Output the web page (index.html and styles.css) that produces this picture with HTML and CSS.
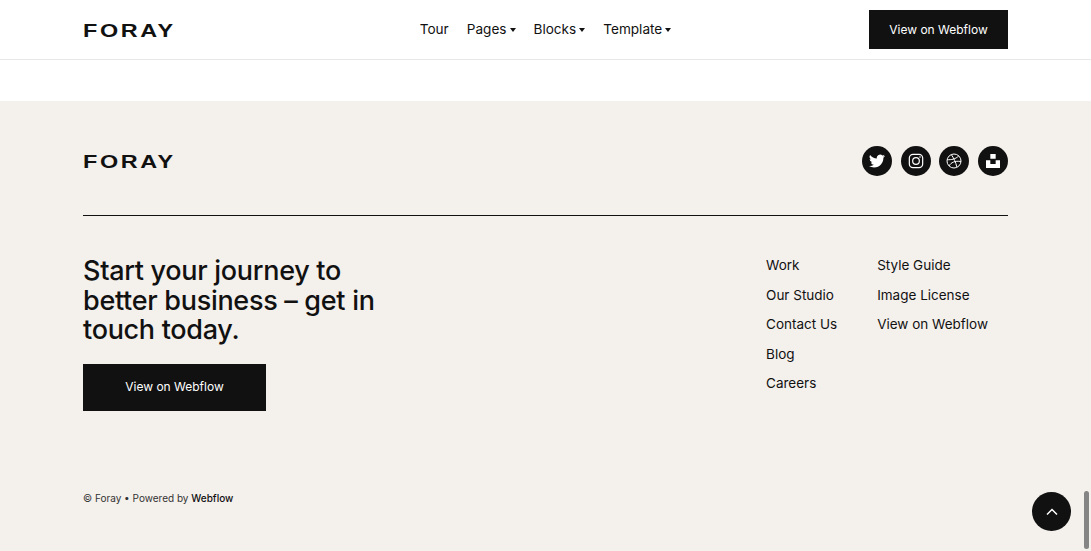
FILE: index.html
```html
<!DOCTYPE html>
<html>
<head>
    <title>Foray</title>
    <link rel="stylesheet" href="styles.css">
</head>
<body>
    <nav class="navbar">
        <div class="container nav-inner">
            <a class="logo"><span class="logo-text">FORAY</span></a>
            <div class="nav-links">
                <a>Tour</a>
                <a>Pages<span class="caret"></span></a>
                <a>Blocks<span class="caret"></span></a>
                <a>Template<span class="caret"></span></a>
            </div>
            <a class="btn btn-nav">View on Webflow</a>
        </div>
    </nav>

    <div class="spacer"></div>

    <footer class="footer">
        <div class="container">
            <div class="footer-top">
                <a class="logo"><span class="logo-text">FORAY</span></a>
                <div class="socials">
                    <a class="social">
                        <svg width="16" height="16" viewBox="0 0 24 24"><path fill="#fff" d="M23.95 4.57a10 10 0 0 1-2.82.77 4.96 4.96 0 0 0 2.16-2.72c-.95.55-2 .96-3.12 1.19a4.92 4.92 0 0 0-8.38 4.48A13.98 13.98 0 0 1 1.67 3.15a4.92 4.92 0 0 0 1.52 6.57 4.9 4.9 0 0 1-2.23-.61v.06a4.92 4.92 0 0 0 3.95 4.83 4.94 4.94 0 0 1-2.21.08 4.94 4.94 0 0 0 4.6 3.42A9.87 9.87 0 0 1 0 19.54a13.94 13.94 0 0 0 7.55 2.21c9.06 0 14-7.5 14-13.98 0-.21 0-.42-.02-.63a9.94 9.94 0 0 0 2.46-2.55z"/></svg>
                    </a>
                    <a class="social">
                        <svg width="16" height="16" viewBox="0 0 24 24" fill="none" stroke="#fff" stroke-width="1.8"><rect x="2" y="2" width="20" height="20" rx="5.5"/><circle cx="12" cy="12" r="5"/><circle cx="18" cy="6" r="1.2" fill="#fff" stroke="none"/></svg>
                    </a>
                    <a class="social">
                        <svg width="16" height="16" viewBox="0 0 24 24" fill="none" stroke="#fff" stroke-width="1.500"><circle cx="12" cy="12" r="10.500"/><path d="M8 2.600c3.500 4.600 6.800 11.600 8.300 18.600M1.800 10c6 .4 12.600-.7 17.200-5.600M4.600 19.400c2.800-5.200 9-8.200 17.800-6.600"/></svg>
                    </a>
                    <a class="social">
                        <svg width="16" height="16" viewBox="0 0 24 24"><path fill="#fff" d="M8 1.500h8v7H8zM1.500 11H8v5.500h8V11h6.500v11.500h-21z"/></svg>
                    </a>
                </div>
            </div>

            <div class="footer-main">
                <div class="footer-cta">
                    <h2 class="footer-title">Start your journey to better business – get in touch today.</h2>
                    <a class="btn btn-large">View on Webflow</a>
                </div>
                <div class="footer-links">
                    <div class="link-col">
                        <a>Work</a>
                        <a>Our Studio</a>
                        <a>Contact Us</a>
                        <a>Blog</a>
                        <a>Careers</a>
                    </div>
                    <div class="link-col">
                        <a>Style Guide</a>
                        <a>Image License</a>
                        <a>View on Webflow</a>
                    </div>
                </div>
            </div>

            <p class="copyright">© Foray • Powered by <strong>Webflow</strong></p>
        </div>
    </footer>

    <a class="to-top">
        <svg width="14" height="14" viewBox="0 0 14 14" fill="none" stroke="#fff" stroke-width="1.500"><path d="M2 9.500l5-5 5 5"/></svg>
    </a>
    <div class="scroll-thumb"></div>
</body>
</html>
```

FILE: styles.css
```css
html, body {
    height: 100%;
}

body {
    margin: 0;
    overflow: hidden;
    font-family: "Inter", "Liberation Sans", sans-serif;
    background-color: #fff;
    color: #111;
}

.container {
    width: 925px;
    margin: 0 auto;
}

.navbar {
    height: 59px;
    border-bottom: 1px solid #e8e8e8;
}

.nav-inner {
    height: 59px;
    display: grid;
    grid-template-columns: 1fr auto 1fr;
    align-items: center;
}

.logo {
    display: block;
    width: 91px;
    height: 14px;
}

.logo-text {
    display: block;
    font-family: "Liberation Sans", Arial, sans-serif;
    font-size: 18px;
    font-weight: 700;
    line-height: 16px;
    letter-spacing: 2px;
    transform: scaleX(1.3);
    transform-origin: left center;
    white-space: nowrap;
}

.nav-links {
    display: flex;
    gap: 18px;
    padding-bottom: 1px;
    font-size: 13.600px;
}

.caret {
    display: inline-block;
    margin-left: 3px;
    vertical-align: 2px;
    border-left: 3px solid transparent;
    border-right: 3px solid transparent;
    border-top: 4px solid #111;
}

.btn {
    display: flex;
    align-items: center;
    justify-content: center;
    box-sizing: border-box;
    background-color: #111;
    color: #fff;
    font-size: 12px;
}

.btn-nav {
    justify-self: end;
    width: 139px;
    height: 39px;
}

.btn-large {
    width: 183px;
    height: 47px;
    padding-bottom: 1px;
}

.spacer {
    height: 41px;
}

.footer {
    height: 450px;
    background-color: #f4f0ec;
}

.footer-top {
    display: flex;
    align-items: center;
    justify-content: space-between;
    padding: 45px 0 39px;
    border-bottom: 1px solid #111;
}

.socials {
    display: flex;
    gap: 8.670px;
}

.social {
    width: 30px;
    height: 30px;
    border-radius: 50%;
    background-color: #111;
    display: flex;
    align-items: center;
    justify-content: center;
}

.footer-main {
    display: flex;
    justify-content: space-between;
    padding-top: 40px;
}

.footer-title {
    width: 310px;
    margin: 0 0 19px;
    font-size: 27px;
    font-weight: 500;
    line-height: 29.500px;
    letter-spacing: -0.3px;
}

.footer-links {
    display: flex;
    gap: 40px;
    padding-right: 20px;
}

.link-col {
    display: flex;
    flex-direction: column;
    gap: 11px;
    font-size: 13.500px;
    line-height: 18.500px;
}

.copyright {
    margin: 81px 0 0;
    font-size: 10px;
    color: #333;
}

.copyright strong {
    font-weight: 500;
    color: #111;
}

.to-top {
    position: absolute;
    left: 1032px;
    top: 492px;
    width: 39px;
    height: 39px;
    border-radius: 50%;
    background-color: #111;
    display: flex;
    align-items: center;
    justify-content: center;
}

.scroll-thumb {
    position: absolute;
    left: 1084px;
    top: 491px;
    width: 5px;
    height: 58px;
    border-radius: 3px;
    background-color: #858585;
}
```
